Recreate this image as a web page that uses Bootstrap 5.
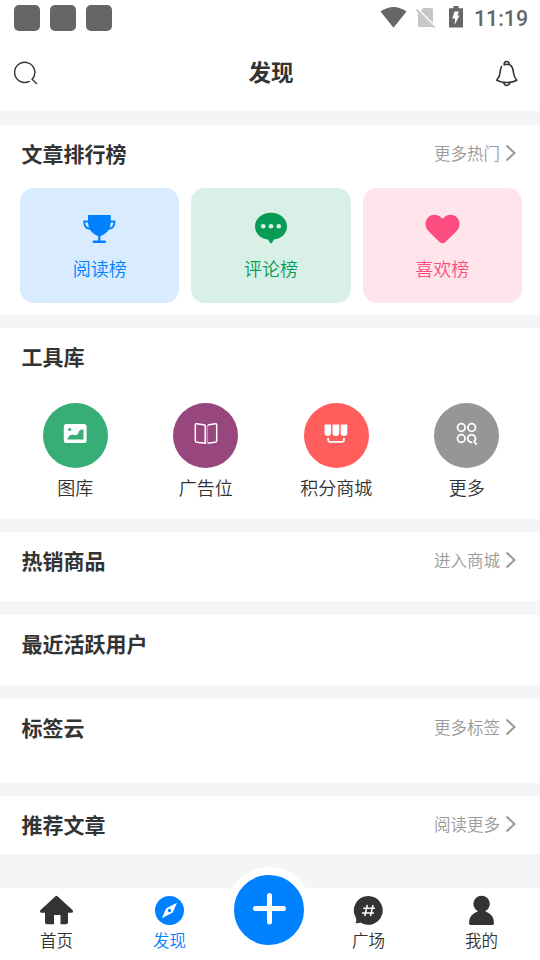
<!DOCTYPE html>
<html lang="zh-CN">
<head>
<meta charset="utf-8">
<meta name="viewport" content="width=device-width, initial-scale=1">
<title>发现</title>
<link href="https://cdn.jsdelivr.net/npm/bootstrap@5.3.0/dist/css/bootstrap.min.css" rel="stylesheet">
<style>
body{font-family:"Noto Sans CJK SC",sans-serif;font-weight:350;background:#f5f5f5;color:#333;width:540px;height:960px;overflow:hidden}
svg{display:block;flex:none}
.status-bar{height:36px;padding:0 12px 0 14px;color:#666}
.notice{width:26px;height:26px;border-radius:5px;background:#666}
.clock{font:500 21.3px/36px Roboto,sans-serif;padding-top:2px;width:54px;text-align:right;white-space:nowrap;padding-right:1px}
.app-head{height:75px;padding:0 21px 2px 14px}
.app-title{font-size:22.5px;font-weight:700;line-height:34px;padding:0 0 3px 9px}
.page-block{margin-top:14px}
.block-head{height:58px;padding:0 23px 2px 21.5px}
.block-title{font-size:21px;font-weight:700;line-height:32px}
.more{font-size:16.5px;line-height:24px;color:#999;gap:5px;padding-bottom:1px}
.ranks{padding:5px 18px 0 20px;gap:12px}
.rank{height:115px;border-radius:14px;font-size:18px;line-height:26px;padding-top:24px}
.rank svg{margin-bottom:11px}
.rank-read{background:#d9ebff;color:#0081ff}
.rank-talk{background:#d9f0e6;color:#079b56}
.rank-like{background:#fee5eb;color:#fb4d7f}
.tools{padding:17px 8px 0 10px}
.tool{font-size:18px;line-height:26px;gap:6px}
.disc{width:65px;height:65px;color:#fff;padding-bottom:4px}
.tabs{height:72px;padding-right:2px}
.tab{width:113px;font-size:16.5px;line-height:24px;padding-top:7px;gap:1px;color:#333}
.tab.on{color:#0081ff}
.tab-mid{width:86px}
.post{width:86px;height:86px;border:8px solid #fff;background:#0081ff;top:-21px;left:0}
</style>
</head>
<body class="d-flex flex-column">
<header class="bg-white">
  <div class="status-bar d-flex align-items-center justify-content-between">
    <div class="d-flex" style="gap:10px"><i class="notice"></i><i class="notice"></i><i class="notice"></i></div>
    <div class="d-flex align-items-center">
      <svg width="148" height="36" viewBox="380 0 148 36" style="margin-right:-54px">
        <path fill="#666" d="M380.500 11.500Q393.500 2.500 406.500 11.500L393.500 27.700Z"/>
        <path fill="#c6c6c6" d="M423.500 8H431.500Q433 8 433 9.500V23.800L420.200 11.200ZM418 12.500V25.500Q418 27 419.500 27H432.500Z"/>
        <path stroke="#c6c6c6" stroke-width="1.800" d="M416.500 9.500L434.500 27.500"/>
        <path stroke="#fff" stroke-width="1.300" d="M418.500 9.400L435 25.900"/>
        <path fill="#666" d="M453.500 6H458.500V8.200H463V27.500H449V8.200H453.500Z"/>
        <path fill="#fff" d="M454.500 11.500H459L457.300 15.600H459.500L454.500 25L455.200 18.500H452.300Z"/>
      </svg>
      <span class="clock">11:19</span>
    </div>
  </div>
  <div class="app-head d-flex align-items-center justify-content-between">
    <svg width="24" height="26" viewBox="14 60 24 26" fill="none" stroke="#333" stroke-width="1.400" stroke-linecap="round"><path d="M29.300 81.400A10.100 10.100 0 1 1 32.100 79.300L36.500 83.500"/></svg>
    <div class="app-title">发现</div>
    <svg width="24" height="28" viewBox="495 59 24 28" fill="none" stroke="#333" stroke-width="1.600" stroke-linecap="round" stroke-linejoin="round"><path d="M501.500 66.500Q500.200 69 500 73Q499.800 76.500 496.700 80.200Q501 82.500 506.700 82.500T516.800 80.200Q514 77 513.500 73Q513 66 509.500 64.700Q507 63.700 504.200 64.800C503.500 60.500 509.800 60.500 509.200 64.400M503.500 82.800Q506.700 88.300 510 82.800"/></svg>
  </div>
</header>

<main>
  <section class="page-block bg-white" style="height:190px">
    <div class="block-head d-flex align-items-center justify-content-between"><h2 class="block-title m-0">文章排行榜</h2>
      <a class="more d-flex align-items-center text-decoration-none">更多热门<svg width="12" height="18" viewBox="0 0 12 18" fill="none" stroke="#999" stroke-width="2"><path d="M1.500 1.500L9.500 9L1.500 16.500"/></svg></a></div>
    <div class="ranks d-flex">
      <div class="rank rank-read flex-fill d-flex flex-column align-items-center">
        <svg width="34" height="32" viewBox="83 212 34 32"><path fill="currentColor" d="M88 215.700Q88 214.900 89 214.900H110Q110.800 214.900 110.800 215.700V222Q110.800 232 100.400 236.300V240.500H105Q106 240.500 106 241.700T105 243H93.600Q92.600 243 92.600 241.700T93.600 240.500H98.200V236.300Q88 232 88 222Z"/><path fill="none" stroke="currentColor" stroke-width="1.800" d="M89 221.500H84.200Q84 228.800 91 229M110 221.500H114.600Q114.500 228.800 107.500 229"/></svg>
        <span>阅读榜</span>
      </div>
      <div class="rank rank-talk flex-fill d-flex flex-column align-items-center">
        <svg width="34" height="32" viewBox="254 212 34 32"><path fill="currentColor" d="M271 212.700C280 212.700 287 218.500 287 226.500C287 233.500 281 239 274 239.500L272 242.700Q271 244 270 242.700L268 239.500C261 239 255 233.500 255 226.500C255 218.500 262 212.700 271 212.700Z"/><circle cx="263.200" cy="226.300" r="2.300" fill="#d9f0e6"/><circle cx="271" cy="226.300" r="2.300" fill="#d9f0e6"/><circle cx="278.800" cy="226.300" r="2.300" fill="#d9f0e6"/></svg>
        <span>评论榜</span>
      </div>
      <div class="rank rank-like flex-fill d-flex flex-column align-items-center">
        <svg width="36" height="32" viewBox="424 212 36 32"><path fill="currentColor" d="M442.500 218.700C447 213.500 453 214 456.500 217C460.500 221 460.500 227 456.700 231L445.500 242Q442.500 244.500 439.500 242L428.300 231C424.500 227 424.500 221 428.500 217C432 214 438 213.500 442.500 218.700Z"/></svg>
        <span>喜欢榜</span>
      </div>
    </div>
  </section>

  <section class="page-block bg-white" style="height:191px;margin-top:13px">
    <div class="block-head d-flex align-items-center"><h2 class="block-title m-0">工具库</h2></div>
    <div class="tools d-flex">
      <div class="tool col-3 d-flex flex-column align-items-center">
        <div class="disc rounded-circle d-flex align-items-center justify-content-center" style="background:#36ae76"><svg width="24" height="24" viewBox="63.500 422 24 24"><rect x="64.300" y="424" width="22.800" height="19" rx="2.500" fill="#fff"/><circle cx="70.200" cy="429.500" r="1.600" fill="#36ae76"/><path fill="#36ae76" d="M67.800 439.500C69 435.500 71 434.500 73.500 434.800C78 436 78 434.500 79.300 431.800C80.500 429.500 82.500 429 84 430V439.500Z"/></svg></div>
        <span>图库</span>
      </div>
      <div class="tool col-3 d-flex flex-column align-items-center">
        <div class="disc rounded-circle d-flex align-items-center justify-content-center" style="background:#98467e"><svg width="24" height="24" viewBox="194 422 24 24" fill="none" stroke="#fff" stroke-width="1.500" stroke-linejoin="round"><path d="M205.200 425L196.800 423.700Q195.300 423.500 195.300 425V440.500Q195.300 442 196.800 442.200L205.200 443.300V425M207.800 424.900L215.200 423.700Q216.700 423.500 216.700 425V440.500Q216.700 442 215.200 442.200L207.500 443.300"/><path stroke="#d6b5cb" stroke-width="1" d="M207.200 425V443"/></svg></div>
        <span>广告位</span>
      </div>
      <div class="tool col-3 d-flex flex-column align-items-center">
        <div class="disc rounded-circle d-flex align-items-center justify-content-center" style="background:#ff5e5c"><svg width="24" height="24" viewBox="324.500 422 24 24"><path fill="#fff" d="M325 424.500H331.500V433Q331.500 436 328.300 436T325 433ZM333 424.500H339.700V433Q339.700 436 336.300 436T333 433ZM341.200 424.500H347.800V433Q347.800 436 344.500 436T341.200 433Z"/><path d="M328.800 438V440.600Q328.800 441.800 330 441.800H343.200Q344.400 441.800 344.400 440.600V438" fill="none" stroke="#fff" stroke-width="1.800"/></svg></div>
        <span>积分商城</span>
      </div>
      <div class="tool col-3 d-flex flex-column align-items-center">
        <div class="disc rounded-circle d-flex align-items-center justify-content-center" style="background:#969696"><svg width="24" height="24" viewBox="455 422 24 24" fill="none" stroke="#fff" stroke-width="1.800"><circle cx="461.300" cy="427.500" r="3.800"/><circle cx="471.700" cy="427.500" r="3.800"/><circle cx="461.300" cy="438.500" r="3.800"/><path d="M472.300 442.300A3.900 3.900 0 1 1 474.400 441.200V442.200L476.700 444.500"/></svg></div>
        <span>更多</span>
      </div>
    </div>
  </section>

  <section class="page-block bg-white" style="height:69px;margin-top:13px">
    <div class="block-head d-flex align-items-center justify-content-between"><h2 class="block-title m-0">热销商品</h2>
      <a class="more d-flex align-items-center text-decoration-none">进入商城<svg width="12" height="18" viewBox="0 0 12 18" fill="none" stroke="#999" stroke-width="2"><path d="M1.500 1.500L9.500 9L1.500 16.500"/></svg></a></div>
  </section>
  <section class="page-block bg-white" style="height:70px">
    <div class="block-head d-flex align-items-center"><h2 class="block-title m-0">最近活跃用户</h2></div>
  </section>
  <section class="page-block bg-white" style="height:84px">
    <div class="block-head d-flex align-items-center justify-content-between"><h2 class="block-title m-0">标签云</h2>
      <a class="more d-flex align-items-center text-decoration-none">更多标签<svg width="12" height="18" viewBox="0 0 12 18" fill="none" stroke="#999" stroke-width="2"><path d="M1.500 1.500L9.500 9L1.500 16.500"/></svg></a></div>
  </section>
  <section class="page-block bg-white" style="height:58px;margin-top:13px">
    <div class="block-head d-flex align-items-center justify-content-between"><h2 class="block-title m-0">推荐文章</h2>
      <a class="more d-flex align-items-center text-decoration-none">阅读更多<svg width="12" height="18" viewBox="0 0 12 18" fill="none" stroke="#999" stroke-width="2"><path d="M1.500 1.500L9.500 9L1.500 16.500"/></svg></a></div>
  </section>
</main>

<nav class="tabs bg-white d-flex mt-auto">
  <a class="tab text-decoration-none d-flex flex-column align-items-center"><svg width="34" height="32" viewBox="40 895 34 32"><path fill="#333" d="M55.800 896Q56.500 895.300 57.200 896L72.700 910.200Q73.600 912.800 71.500 912.800H68V922.500Q68 924.300 66 924.300H60.500V915H54V924.300H47Q45 924.300 45 922.500V912.800H41.500Q39.400 912.800 40.300 910.200Z"/></svg><span>首页</span></a>
  <a class="tab on text-decoration-none d-flex flex-column align-items-center"><svg width="32" height="32" viewBox="154 895 32 32"><circle cx="169.500" cy="910.400" r="14.500" fill="#0081ff"/><path fill="#fff" d="M177 902.800L172.700 912.500L161.800 918.200L166.300 908.200Z"/><circle cx="169.500" cy="910.500" r="1.700" fill="#0081ff"/></svg><span>发现</span></a>
  <div class="tab-mid position-relative"><div class="post rounded-circle position-absolute d-flex align-items-center justify-content-center"><svg width="36" height="36" viewBox="-0.500 0 36 36" stroke="#fff" stroke-width="5" stroke-linecap="round"><path d="M18 3.500V30M4 16.500H32"/></svg></div></div>
  <a class="tab text-decoration-none d-flex flex-column align-items-center"><svg width="32" height="32" viewBox="353 895 32 32"><path fill="#333" d="M368.500 896A14.400 14.400 0 1 1 360.500 922.500Q358.500 923.800 355.500 923Q357 921 355.800 917.500A14.400 14.400 0 0 1 368.500 896Z"/><path stroke="#fff" stroke-width="1.500" fill="none" d="M367.300 905L364.800 916M373 905L370.500 916M363.200 908.200H375M362 913H374"/></svg><span>广场</span></a>
  <a class="tab text-decoration-none d-flex flex-column align-items-center"><svg width="32" height="32" viewBox="466 895 32 32"><path fill="#333" d="M478 911.300A8.200 8.200 0 1 1 485.200 911.300Q494 914.500 494 923Q494 925 492.500 925H470.500Q469 925 469 923Q469 914.500 478 911.300Z"/></svg><span>我的</span></a>
</nav>
<script src="https://cdn.jsdelivr.net/npm/bootstrap@5.3.0/dist/js/bootstrap.bundle.min.js"></script>
</body>
</html>
